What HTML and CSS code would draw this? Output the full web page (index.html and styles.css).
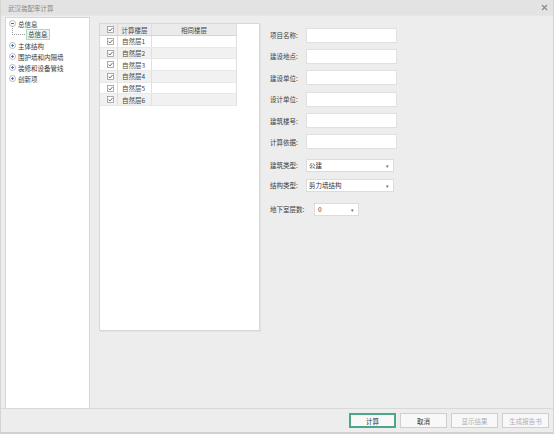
FILE: index.html
```html
<!DOCTYPE html>
<html>
<head>
<meta charset="utf-8">
<link rel="stylesheet" href="styles.css">
</head>
<body>
<div class="window">
  <div class="titlebar">
    <span class="title">武汉装配率计算</span>
    <svg class="close" width="7" height="7" viewBox="0 0 7 7"><path d="M1 1L6 6M6 1L1 6" stroke="#8a8a8a" stroke-width="1.2"/></svg>
  </div>
  <div class="main">
    <div class="tree">
      <div class="node">
        <svg class="tog" width="7" height="7" viewBox="0 0 7 7"><circle cx="3.5" cy="3.5" r="3" fill="#fff" stroke="#a8a8a8" stroke-width="0.8"/><path d="M2 3.5H5" stroke="#555" stroke-width="0.9"/></svg>
        <span class="label">总信息</span>
      </div>
      <div class="node child">
        <span class="conn"></span>
        <span class="label sel">总信息</span>
      </div>
      <div class="node">
        <svg class="tog" width="7" height="7" viewBox="0 0 7 7"><circle cx="3.5" cy="3.5" r="3" fill="#fff" stroke="#a8a8a8" stroke-width="0.8"/><path d="M2 3.5H5M3.5 2V5" stroke="#3d6fb6" stroke-width="0.9"/></svg>
        <span class="label">主体结构</span>
      </div>
      <div class="node">
        <svg class="tog" width="7" height="7" viewBox="0 0 7 7"><circle cx="3.5" cy="3.5" r="3" fill="#fff" stroke="#a8a8a8" stroke-width="0.8"/><path d="M2 3.5H5M3.5 2V5" stroke="#3d6fb6" stroke-width="0.9"/></svg>
        <span class="label">围护墙和内隔墙</span>
      </div>
      <div class="node">
        <svg class="tog" width="7" height="7" viewBox="0 0 7 7"><circle cx="3.5" cy="3.5" r="3" fill="#fff" stroke="#a8a8a8" stroke-width="0.8"/><path d="M2 3.5H5M3.5 2V5" stroke="#3d6fb6" stroke-width="0.9"/></svg>
        <span class="label">装修和设备管线</span>
      </div>
      <div class="node">
        <svg class="tog" width="7" height="7" viewBox="0 0 7 7"><circle cx="3.5" cy="3.5" r="3" fill="#fff" stroke="#a8a8a8" stroke-width="0.8"/><path d="M2 3.5H5M3.5 2V5" stroke="#3d6fb6" stroke-width="0.9"/></svg>
        <span class="label">创新项</span>
      </div>
    </div>
    <div class="content">
      <div class="gridpanel">
        <div class="grow head">
          <div class="c1"><span class="cb"><svg width="7" height="7" viewBox="0 0 7 7"><rect x="0.5" y="0.5" width="6" height="6" fill="#fff" stroke="#9a9a9a" stroke-width="0.8"/><path d="M1.5 3.6L2.9 5L5.5 2" fill="none" stroke="#444" stroke-width="0.8"/></svg></span></div>
          <div class="c2 hc">计算楼层</div>
          <div class="c3 hc">相同楼层</div>
        </div>
        <div class="grow">
          <div class="c1"><span class="cb"><svg width="7" height="7" viewBox="0 0 7 7"><rect x="0.5" y="0.5" width="6" height="6" fill="#fff" stroke="#9a9a9a" stroke-width="0.8"/><path d="M1.5 3.6L2.9 5L5.5 2" fill="none" stroke="#444" stroke-width="0.8"/></svg></span></div>
          <div class="c2">自然层1</div><div class="c3"></div>
        </div>
        <div class="grow alt">
          <div class="c1"><span class="cb"><svg width="7" height="7" viewBox="0 0 7 7"><rect x="0.5" y="0.5" width="6" height="6" fill="#fff" stroke="#9a9a9a" stroke-width="0.8"/><path d="M1.5 3.6L2.9 5L5.5 2" fill="none" stroke="#444" stroke-width="0.8"/></svg></span></div>
          <div class="c2">自然层2</div><div class="c3"></div>
        </div>
        <div class="grow">
          <div class="c1"><span class="cb"><svg width="7" height="7" viewBox="0 0 7 7"><rect x="0.5" y="0.5" width="6" height="6" fill="#fff" stroke="#9a9a9a" stroke-width="0.8"/><path d="M1.5 3.6L2.9 5L5.5 2" fill="none" stroke="#444" stroke-width="0.8"/></svg></span></div>
          <div class="c2">自然层3</div><div class="c3"></div>
        </div>
        <div class="grow alt">
          <div class="c1"><span class="cb"><svg width="7" height="7" viewBox="0 0 7 7"><rect x="0.5" y="0.5" width="6" height="6" fill="#fff" stroke="#9a9a9a" stroke-width="0.8"/><path d="M1.5 3.6L2.9 5L5.5 2" fill="none" stroke="#444" stroke-width="0.8"/></svg></span></div>
          <div class="c2">自然层4</div><div class="c3"></div>
        </div>
        <div class="grow">
          <div class="c1"><span class="cb"><svg width="7" height="7" viewBox="0 0 7 7"><rect x="0.5" y="0.5" width="6" height="6" fill="#fff" stroke="#9a9a9a" stroke-width="0.8"/><path d="M1.5 3.6L2.9 5L5.5 2" fill="none" stroke="#444" stroke-width="0.8"/></svg></span></div>
          <div class="c2">自然层5</div><div class="c3"></div>
        </div>
        <div class="grow alt">
          <div class="c1"><span class="cb"><svg width="7" height="7" viewBox="0 0 7 7"><rect x="0.5" y="0.5" width="6" height="6" fill="#fff" stroke="#9a9a9a" stroke-width="0.8"/><path d="M1.5 3.6L2.9 5L5.5 2" fill="none" stroke="#444" stroke-width="0.8"/></svg></span></div>
          <div class="c2">自然层6</div><div class="c3"></div>
        </div>
      </div>
      <div class="form">
        <div class="frow r1"><span class="flabel">项目名称:</span><span class="tbox"></span></div>
        <div class="frow"><span class="flabel">建设地点:</span><span class="tbox"></span></div>
        <div class="frow"><span class="flabel">建设单位:</span><span class="tbox"></span></div>
        <div class="frow"><span class="flabel">设计单位:</span><span class="tbox"></span></div>
        <div class="frow"><span class="flabel">建筑楼号:</span><span class="tbox"></span></div>
        <div class="frow"><span class="flabel">计算依据:</span><span class="tbox"></span></div>
        <div class="frow crow c-a"><span class="flabel">建筑类型:</span><span class="combo"><span class="val">公建</span><span class="arr">▾</span></span></div>
        <div class="frow crow c-b"><span class="flabel">结构类型:</span><span class="combo"><span class="val">剪力墙结构</span><span class="arr">▾</span></span></div>
        <div class="frow crow c-c"><span class="flabel wide">地下室层数:</span><span class="combo small"><span class="val">0</span><span class="arr">▾</span></span></div>
      </div>
    </div>
  </div>
  <div class="footer">
    <button class="btn primary">计算</button>
    <button class="btn">取消</button>
    <button class="btn disabled">显示结果</button>
    <button class="btn disabled">生成报告书</button>
  </div>
</div>
</body>
</html>
```
FILE: styles.css
```css
* { box-sizing: border-box; }
html, body { margin: 0; padding: 0; }
body {
  background: #ededed;
  font-family: "Noto Sans CJK SC", "Microsoft YaHei", sans-serif;
  font-size: 6.5px;
  color: #3a3a3a;
}
.window {
  width: 554px;
  height: 434px;
  border-left: 1px solid #d4d4d4;
  border-right: 1px solid #d4d4d4;
  border-bottom: 2px solid #d0d0d0;
  background: #ededed;
  display: flex;
  flex-direction: column;
}
.titlebar {
  height: 16px;
  background: #e3e3e3;
  display: flex;
  align-items: center;
  justify-content: space-between;
  padding: 0 5px 0 7px;
  border-bottom: 1px solid #e6e6e6;
}
.title { color: #8a8a8a; font-size: 6.5px; }
.close { display: block; }
.main {
  flex: 1;
  display: flex;
  min-height: 0;
}
.tree {
  width: 85px;
  margin-left: 4px;
  margin-top: 1px;
  background: #fff;
  border: 1px solid #d6d6d6;
  border-bottom: none;
  padding-top: 0;
  flex: none;
}
.node {
  height: 11px;
  display: flex;
  align-items: center;
  padding-left: 3px;
  position: relative;
}
.tog { display: block; margin-right: 2px; flex: none; }
.label { color: #3c3c3c; white-space: nowrap; line-height: 10px; }
.child { padding-left: 20px; }
.conn {
  position: absolute;
  left: 6px;
  top: -3px;
  width: 13px;
  height: 9px;
  border-left: 1px dotted #9a9a9a;
  border-bottom: 1px dotted #9a9a9a;
}
.sel {
  background: #e9f6ef;
  border: 1px solid #a6dcc2;
  padding: 0 1px;
  line-height: 9px;
}
.content {
  flex: 1;
  display: flex;
  align-items: flex-start;
  padding: 7px 0 0 9px;
}
.gridpanel {
  width: 161px;
  height: 308px;
  background: #fff;
  border: 1px solid #d8d8d8;
  box-shadow: 1px 1px 0 #e2e2e2;
  flex: none;
}
.grow {
  display: flex;
  height: 11.7px;
  width: 137px;
  border-bottom: 1px solid #e8e8e8;
}
.grow.head {
  height: 12px;
  background: #ebebeb;
  border-bottom: 1px solid #d4d4d4;
}
.grow.alt { background: #f1f1f1; }
.c1 {
  width: 18px;
  flex: none;
  display: flex;
  align-items: center;
  justify-content: flex-end;
  padding-right: 3px;
  border-right: 1px solid #dcdcdc;
}
.cb svg { display: block; }
.c2 {
  width: 34px;
  flex: none;
  border-right: 1px solid #e0e0e0;
  display: flex;
  align-items: center;
  padding-left: 4px;
  color: #444;
  white-space: nowrap;
}
.c3 {
  width: 85px;
  flex: none;
  border-right: 1px solid #e0e0e0;
  display: flex;
  align-items: center;
  justify-content: center;
}
.hc { justify-content: center; padding-left: 0; color: #444; }
.form {
  margin-left: 10px;
  padding-top: 2px;
  display: flex;
  flex-direction: column;
  flex: none;
}
.frow {
  display: flex;
  align-items: center;
  height: 15px;
  margin-top: 6.4px;
}
.frow.r1 { margin-top: 2.5px; }
.flabel { width: 36px; flex: none; color: #3c3c3c; white-space: nowrap; overflow: visible; }
.flabel.wide { width: 44px; }
.tbox {
  width: 91px;
  flex: none;
  height: 15px;
  background: #fff;
  border: 1px solid #e0e0e0;
}
.crow { height: 13px; }
.c-a { margin-top: 9.5px; }
.c-b { margin-top: 7px; }
.c-c { margin-top: 11px; }
.combo {
  width: 88px;
  flex: none;
  height: 13px;
  background: #fff;
  border: 1px solid #dcdcdc;
  display: flex;
  align-items: center;
  justify-content: space-between;
  padding: 0 4px 0 2px;
  color: #333;
}
.combo.small { width: 45px; padding-left: 3px; }
.val { color: #333; }
.arr { font-size: 5px; color: #666; }
.footer {
  height: 24px;
  border-top: 1px solid #d8d8d8;
  display: flex;
  justify-content: flex-end;
  align-items: flex-start;
  padding: 4px 4px 0 0;
  gap: 4px;
}
.btn {
  width: 47px;
  height: 15px;
  margin: 0;
  padding: 0;
  background: #f8f8f8;
  border: 1px solid #cfcfcf;
  font-family: inherit;
  font-size: 6.5px;
  color: #333;
}
.btn.primary { border: 2px solid #4da68b; }
.btn.disabled { color: #b0b0b0; }
```
